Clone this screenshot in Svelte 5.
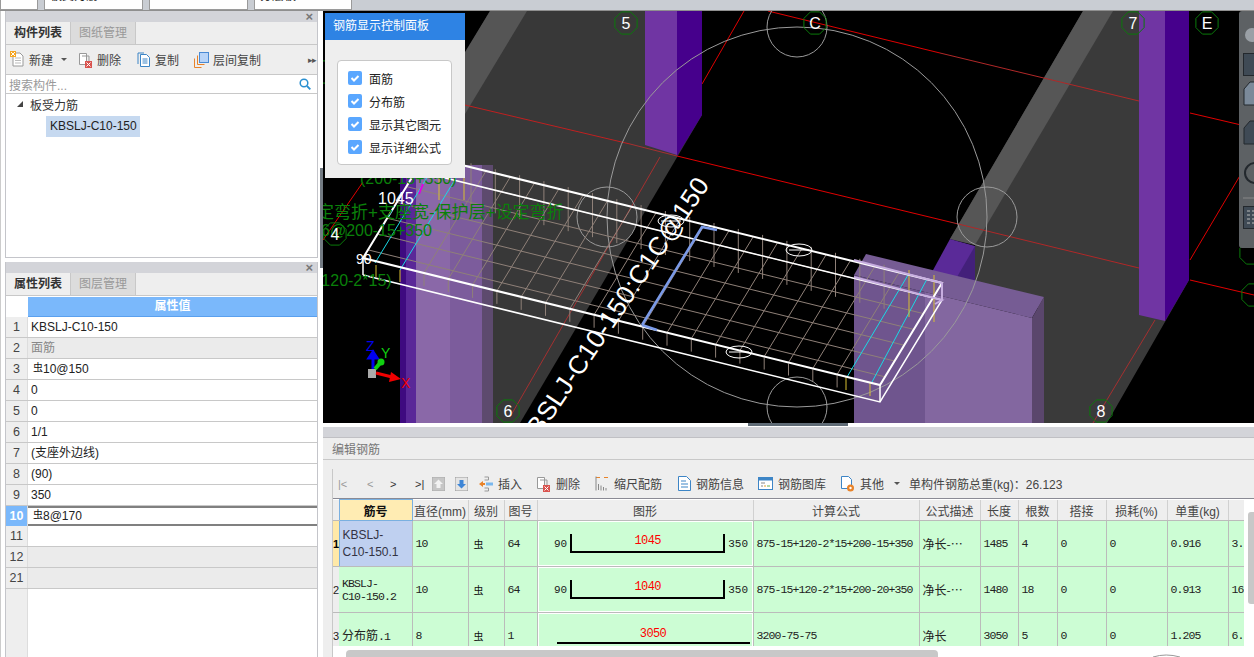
<script>
  const props = [
    { n: 1, v: 'KBSLJ-C10-150' },
    { n: 2, v: '面筋', group: true },
    { n: 3, v: '10@150', grade: true },
    { n: 4, v: '0' },
    { n: 5, v: '0' },
    { n: 6, v: '1/1' },
    { n: 7, v: '(支座外边线)' },
    { n: 8, v: '(90)' },
    { n: 9, v: '350' },
    { n: 10, v: '8@170', grade: true, active: true },
    { n: 11, v: '' },
    { n: 12, v: '', group: true },
    { n: 21, v: '', group: true }
  ];

  const checks = ['面筋', '分布筋', '显示其它图元', '显示详细公式'];

  const cols = [6, 73, 56, 36, 33, 216, 166, 61, 38, 39, 49, 61, 61, 61];
  const heads = ['筋号', '直径(mm)', '级别', '图号', '图形', '计算公式', '公式描述', '长度', '根数', '搭接', '损耗(%)', '单重(kg)', '总重'];

  const rows = [
    { n: 1, dia: 10, fig: 64, l: 90, mid: 1045, r: 350, f: '875-15+120-2*15+200-15+350', d: '净长-…', len: 1485, cnt: 4, w: '0.916', t: '3.' },
    { n: 2, dia: 10, fig: 64, l: 90, mid: 1040, r: 350, f: '875-15+120-2*15+200-20+350', d: '净长-…', len: 1480, cnt: 18, w: '0.913', t: '16' },
    { n: 3, dia: 8, fig: 1, mid: 3050, flat: true, f: '3200-75-75', d: '净长', len: 3050, cnt: 5, w: '1.205', t: '6.' }
  ];

  // slab corners in page coordinates, read off the 3d view
  const BL = [363, 258], BR = [880, 385], TL = [425, 156], TR = [942, 283];
  const backY = (x) => 156 + (x - 425) * 0.2456;
  const frontY = (x) => 258 + (x - 363) * 0.2456;
  const lerp = (a, b, t) => [a[0] + (b[0] - a[0]) * t, a[1] + (b[1] - a[1]) * t];
  const quad = (pts, dy = 0) => pts.map((p) => p[0] + ',' + (p[1] + dy)).join(' ');

  const frontTicks = Array.from({ length: 18 }, (_, i) => 424 + 24.3 * i);
  const backTicks = Array.from({ length: 18 }, (_, i) => 471 + 24.3 * i);
  const longLines = [0.08, 0.235, 0.39, 0.545, 0.7, 0.855].map((v) => [lerp(BL, TL, v), lerp(BR, TR, v)]);

  function octagon(cx, cy, r) {
    let p = [];
    for (let i = 0; i < 8; i++) {
      const a = Math.PI / 8 + (i * Math.PI) / 4;
      p.push((cx + r * Math.cos(a)).toFixed(1) + ',' + (cy + r * Math.sin(a)).toFixed(1));
    }
    return p.join(' ');
  }

  const axes = [
    { x: 626, y: 23, t: '5' },
    { x: 815, y: 23, t: 'C' },
    { x: 1133, y: 23, t: '7' },
    { x: 1207, y: 23, t: 'E' },
    { x: 335, y: 234, t: '4' },
    { x: 508, y: 411, t: '6' },
    { x: 1101, y: 411, t: '8' },
    { x: 323, y: 72, t: '' },
    { x: 1254, y: 60, t: '' },
    { x: 1251, y: 253, t: '' },
    { x: 1253, y: 295, t: '' }
  ];
</script>

<div class="app">
  <div class="topbar">
    <div class="toptab t0"></div>
    <div class="toptab t1"><span>板受力筋</span></div>
    <div class="toptab t1"><span>KBSLJ-C10-150</span></div>
    <div class="toptab t2"><span>分层板2</span></div>
  </div>

  <div class="main">
    <div class="left">
      <section class="panel first">
        <div class="panel-title"><span class="close">×</span></div>
        <div class="tabs">
          <div class="tab on">构件列表</div>
          <div class="tab">图纸管理</div>
        </div>
        <div class="ptools">
          <div class="pt w-new">
            <svg width="15" height="17" viewBox="0 0 15 17"><path d="M3 2h7l3 3v10H3z" fill="#fff" stroke="#999"/><path d="M5 7h6M5 9.5h6M5 12h6" stroke="#bbb"/><rect x="0" y="0" width="6" height="6" fill="#f5a623"/><path d="M1 1l4 4M5 1L1 5" stroke="#fff"/></svg>
            <span>新建</span><i class="caret"></i>
          </div>
          <div class="pt w-del">
            <svg width="15" height="16" viewBox="0 0 15 16"><path d="M1.500 1.500h7v11h-7z" fill="#fff" stroke="#999"/><path d="M4 4h7v8" fill="none" stroke="#999"/><rect x="7" y="9" width="7" height="7" fill="#d9534f"/><path d="M8.500 10.500l4 4M12.500 10.500l-4 4" stroke="#fff"/></svg>
            <span>删除</span>
          </div>
          <div class="pt w-copy">
            <svg width="14" height="15" viewBox="0 0 14 15"><path d="M3.500 2.500h6l3 3v9h-9z" fill="#fff" stroke="#3d85c6"/><path d="M1 1h6" stroke="#3d85c6"/><path d="M1 1v11" stroke="#3d85c6"/><path d="M5.500 7h5M5.500 9h5M5.500 11h5" stroke="#3d85c6"/></svg>
            <span>复制</span>
          </div>
          <div class="pt">
            <svg width="15" height="16" viewBox="0 0 15 16"><rect x="5.500" y="0.500" width="9" height="10" fill="#b8d4f8" stroke="#4a8ad4"/><path d="M3.500 3.500v9h7" fill="none" stroke="#e8832a"/><path d="M0.500 6.500v9h7" fill="none" stroke="#e8832a"/></svg>
            <span>层间复制</span>
          </div>
          <div class="more">▸▸</div>
        </div>
        <div class="search">
          <span>搜索构件...</span>
          <svg width="12" height="12" viewBox="0 0 12 12"><circle cx="5" cy="5" r="3.800" fill="none" stroke="#2a8fd0" stroke-width="1.500"/><path d="M8 8l3.300 3.300" stroke="#2a8fd0" stroke-width="1.800"/></svg>
        </div>
        <div class="tree">
          <div class="node"><i class="tri"></i><span>板受力筋</span></div>
          <div class="leaf">KBSLJ-C10-150</div>
        </div>
      </section>

      <section class="panel second">
        <div class="panel-title"><span class="close">×</span></div>
        <div class="tabs">
          <div class="tab on">属性列表</div>
          <div class="tab">图层管理</div>
        </div>
        <div class="prop-head"><div class="num blank"></div><div class="val-head">属性值</div></div>
        {#each props as p}
          <div class="prop" class:group={p.group} class:active={p.active}>
            <div class="num">{p.n}</div>
            <div class="val">{#if p.grade}<span class="grade">虫</span>{/if}{p.v}</div>
          </div>
        {/each}
        <div class="prop-rest"><div class="num"></div></div>
      </section>
    </div>

    <div class="vsplit"><div class="thumb"></div></div>

    <div class="right">
      <div class="viewport">
        <svg class="scene" width="931" height="412" viewBox="323 11 931 412">
          <rect x="323" y="11" width="931" height="412" fill="#000" />

          <!-- floor slabs -->
          <polygon points="490,11 702,11 702,115 520,423 400,423 400,163" fill="#383838" />
          <polygon points="490,11 527,11 465,114 465,52" fill="#555" />
          <polygon points="1083,11 1189,11 1189,280 1107,423 1044,423 1044,310 975,290 975,245 950,239" fill="#3a3a3a" />
          <polygon points="1083,11 1113,11 975,245 950,239" fill="#565656" />

          <!-- red axis lines -->
          <g fill="none" stroke="#e00000" stroke-width="1">
            <path d="M768 11L940 53" />
            <path d="M1190 113L1254 128M1190 280L1254 295" />
            <path d="M744 11L702 84" />
            <path d="M630 144L465 105" stroke="#c02020" />
            <path d="M677 156L950 222" />
            <path d="M1254 152L1190 260" />
            <path d="M363 182L323 240" />
            <path d="M660 157L510 417" stroke="#a53030" />
            <path d="M630 144L677 156" stroke="#a53030" />
            <path d="M950 222L1139 268" stroke="#b02828" />
            <path d="M940 53L1139 101" stroke="#b02828" />
            <path d="M1155 320L1093 423" stroke="#a53030" />
          </g>

          <!-- columns -->
          <polygon points="645,11 677,11 677,155 645,145" fill="#7035a3" />
          <polygon points="677,11 702,11 702,115 677,156" fill="#46008c" />
          <polygon points="1139,11 1165,11 1165,321 1139,315" fill="#7035a3" />
          <polygon points="1165,11 1189,11 1189,280 1165,321" fill="#46008c" />

          <rect x="400" y="165" width="6" height="258" fill="#3e0a80" />
          <rect x="406" y="165" width="10" height="258" fill="#5a2898" />
          <rect x="416" y="165" width="34" height="258" fill="#8a68a8" />
          <rect x="450" y="165" width="32" height="258" fill="#7c5c9c" />
          <rect x="482" y="165" width="11" height="258" fill="#5d4a6e" />

          <polygon points="932,272 950,239 975,246 975,290" fill="#5a2a98" />
          <polygon points="957,277 975,246 975,283" fill="#43207a" />
          <polygon points="866,254 1044,297 1032,318 854,275" fill="#765c94" />
          <polygon points="854,275 925,292 925,423 854,423" fill="#6f558e" />
          <polygon points="925,292 1032,318 1032,423 925,423" fill="#8367a0" />
          <polygon points="1032,318 1044,297 1044,423 1032,423" fill="#5a466c" />

          <!-- guide circles -->
          <g fill="none" stroke="#9a9a9a" stroke-width="1">
            <circle cx="797" cy="217" r="190" />
            <circle cx="797" cy="27" r="30" />
            <circle cx="797" cy="407" r="30" />
            <circle cx="607" cy="217" r="30" />
            <circle cx="987" cy="217" r="30" />
          </g>

          <!-- rebar grid -->
          <g stroke="#8f8078" stroke-width="1" fill="none">
            {#each longLines as l}
              <line x1={l[0][0]} y1={l[0][1]} x2={l[1][0]} y2={l[1][1]} />
            {/each}
            {#each frontTicks as x}
              <line x1={x} y1={frontY(x)} x2={x + 62} y2={frontY(x) - 102} />
              <line x1={x} y1={frontY(x) + 1} x2={x} y2={frontY(x) + 13} />
            {/each}
            {#each backTicks as x}
              <line x1={x} y1={backY(x) - 4} x2={x} y2={backY(x) + 40} />
            {/each}
          </g>

          <!-- cyan and yellow edge bars -->
          <g fill="none" stroke-width="1">
            <path d="M375 263L437 161M400 270L462 168M847 377L908 275M872 382L927 279" stroke="#19d9e6" />
            <path d="M376 265V277M400 270V282M439 177V200M464 177V200M909 270V317M934 275V322M846 377V390M870 383V396" stroke="#d8c030" />
          </g>
          <path d="M419 194L423 184" stroke="#e000e0" stroke-width="2" />

          <!-- slab outline -->
          <g fill="none" stroke="#fff">
            <polygon points={quad([TL, TR, BR, BL])} stroke-width="2" />
            <polyline points={quad([TL, TR, BR, BL], 17)} stroke-width="1.500" />
            <path d="M363 258V275M880 385V402" stroke-width="1.500" />
          </g>
          <path d="M854 260L942 283L942 300M854 277L942 300L935 304" fill="none" stroke="#c7aee0" stroke-width="2" />
          <path d="M642 325L702 227L717 230M642 325L657 330" fill="none" stroke="#7a9ae8" stroke-width="2.500" />

          <g fill="none" stroke="#fff" stroke-width="1">
            <ellipse cx="799" cy="250" rx="13" ry="6" />
            <ellipse cx="739" cy="352" rx="13" ry="6" />
            <ellipse cx="671" cy="221" rx="13" ry="6" />
            <path d="M789 250h20M729 352h20M661 221h20" />
          </g>

          <!-- dimension labels -->
          <text class="rot" x="530" y="452" transform="rotate(-56 530 452)" textLength="322" lengthAdjust="spacing">KBSLJ-C10-150:C1C@150</text>
          <g class="green">
            <text x="360" y="184">(200-15+350)</text>
            <text class="wide" x="317" y="218">定弯折+支座宽-保护层+设定弯折</text>
            <text x="321" y="236">6@200-15+350</text>
            <text x="316" y="286">(120-2*15)</text>
          </g>
          <text class="dim" x="378" y="204">1045</text>
          <text class="dim small" x="356" y="264">90</text>

          <!-- axis markers -->
          {#each axes as a}
            <polygon points={octagon(a.x, a.y, 12)} fill="none" stroke="#0a7a0a" />
            <text class="axis" x={a.x} y={a.y + 6}>{a.t}</text>
          {/each}

          <!-- gizmo -->
          <rect x="368" y="369" width="8" height="9" fill="#aaa" />
          <path d="M373 369V358M369 358h8l-4 -6z" stroke="#0000f0" stroke-width="3" fill="#0000f0" />
          <path d="M375 369L381 362" stroke="#10d010" stroke-width="4" />
          <circle cx="381" cy="362" r="3.500" fill="#10d010" />
          <path d="M376 373L392 377" stroke="#f00000" stroke-width="3" />
          <polygon points="391,372 401,379 389,382" fill="#f00000" />
          <text class="giz" x="366" y="351" fill="#0000f0">Z</text>
          <text class="giz" x="381" y="358" fill="#10d010">Y</text>
          <text class="giz" x="401" y="388" fill="#f00000">X</text>

          <!-- right side view toolbar -->
          <rect x="1239" y="11" width="20" height="237" rx="3" fill="#5d6164" />
          <circle cx="1252" cy="35" r="7" fill="#9aa0a6" />
          <rect x="1243.500" y="53.500" width="16" height="22" fill="#3f4a55" stroke="#23282d" />
          <polygon points="1244,89 1250,82 1260,82 1260,105 1244,105" fill="#7b8a9a" stroke="#23282d" />
          <polygon points="1244,128 1250,121 1260,121 1260,144 1244,144" fill="#3f4a55" stroke="#23282d" />
          <circle cx="1255" cy="173" r="10" fill="none" stroke="#23282d" stroke-width="2" />
          <path d="M1243 198h12" stroke="#888" />
          <rect x="1243.500" y="206.500" width="16" height="22" fill="#3f4a55" stroke="#23282d" />
          <path d="M1247 211h3M1247 215h3M1247 219h3M1247 223h3M1252 211h6M1252 215h6M1252 219h6M1252 223h6" stroke="#bbb" />
        </svg>

        <div class="control">
          <div class="control-head">钢筋显示控制面板</div>
          <div class="control-body">
            <div class="check-box">
              {#each checks as c}
                <div class="check">
                  <svg width="14" height="14" viewBox="0 0 14 14"><rect width="14" height="14" rx="2" fill="#5aa7ff" /><path d="M3.500 7l2.500 2.500 4.500-4.500" fill="none" stroke="#fff" stroke-width="2" /></svg>
                  <span>{c}</span>
                </div>
              {/each}
            </div>
          </div>
        </div>
      </div>

      <div class="hsplit"><div class="hthumb"></div></div>

      <div class="editor">
        <div class="editor-bar"></div>
        <div class="editor-title">编辑钢筋</div>
        <div class="editor-body">
          <div class="etools">
            <div class="nav">
              <span class="n1">|&lt;</span><span class="n2">&lt;</span><span class="n3">&gt;</span><span class="n4">&gt;|</span>
            </div>
            <svg class="mv" width="13" height="14" viewBox="0 0 13 14"><rect width="13" height="14" fill="#c6c6c6" stroke="#aaa" /><path d="M6.500 2.500L11 7H8.500v4h-4V7H2z" fill="#f2f2f2" /></svg>
            <svg class="mv m2" width="13" height="14" viewBox="0 0 13 14"><rect width="13" height="14" fill="#e4e4e4" stroke="#999" /><path d="M6.500 11.500L11 7H8.500V3h-4v4H2z" fill="#3d85d6" /></svg>
            <div class="et">
              <svg width="14" height="16" viewBox="0 0 14 16"><path d="M5.500 1h4v3h-4M5.500 12h4v3h-4" fill="none" stroke="#999" /><rect x="7" y="6.500" width="7" height="3" fill="#7ab8ee" /><path d="M0 8l4-3v2h2v2H4v2z" fill="#e8832a" /></svg>
              <span>插入</span>
            </div>
            <div class="et e-del">
              <svg width="15" height="16" viewBox="0 0 15 16"><path d="M1.500 1.500h7v11h-7z" fill="#fff" stroke="#999" /><path d="M4 4h7v8" fill="none" stroke="#999" /><rect x="7" y="9" width="7" height="7" fill="#d9534f" /><path d="M8.500 10.500l4 4M12.500 10.500l-4 4" stroke="#fff" /></svg>
              <span>删除</span>
            </div>
            <div class="et e-scale">
              <svg width="14" height="15" viewBox="0 0 14 15"><path d="M1 1.500h4M9 1.500h4" stroke="#e8832a" /><path d="M1 .5v14M3.500 8v6M6 9.500v5M8.500 11v3.500M11 12v2.500" stroke="#888" /></svg>
              <span>缩尺配筋</span>
            </div>
            <div class="et">
              <svg width="13" height="15" viewBox="0 0 13 15"><path d="M.5.500h8l4 4v10H.5z" fill="#fff" stroke="#3d85c6" /><path d="M3 5h5M3 8h7M3 11h7" stroke="#3d85c6" /></svg>
              <span>钢筋信息</span>
            </div>
            <div class="et">
              <svg width="15" height="13" viewBox="0 0 15 13"><rect x=".5" y=".5" width="14" height="12" fill="#fff" stroke="#3d85c6" /><rect x="1" y="1" width="13" height="2.500" fill="#3d85c6" /><path d="M3 6h4M3 9h2" stroke="#888" /><path d="M6 9h2" stroke="#e8a02a" /><path d="M9 9h3" stroke="#6ab04c" /></svg>
              <span>钢筋图库</span>
            </div>
            <div class="et last">
              <svg width="15" height="16" viewBox="0 0 15 16"><path d="M1.500.500h7l3 3v9h-10z" fill="#fff" stroke="#3d85c6" /><circle cx="10.500" cy="12" r="3.500" fill="#e8832a" /><circle cx="10.500" cy="12" r="1.200" fill="#fff" /></svg>
              <span>其他</span><i class="caret"></i>
            </div>
            <div class="total">单构件钢筋总重(kg)：26.123</div>
          </div>

          <div class="grid-row">
            <div class="grid-wrap">
              <table>
                <colgroup>
                  {#each cols as w}<col style="width:{w}px" />{/each}
                </colgroup>
                <thead>
                  <tr>
                    <th class="rn"></th>
                    {#each heads as h, i}
                      <th class:cur={i === 0}>{h}</th>
                    {/each}
                  </tr>
                </thead>
                <tbody>
                  {#each rows as r}
                    <tr>
                      <td class="rn" class:sel={r.n === 1}>{r.n}</td>
                      {#if r.n === 1}
                        <td class="name-sel">KBSLJ-<br />C10-150.1</td>
                      {:else if r.n === 2}
                        <td class="m name">KBSLJ-<br />C10-150.2</td>
                      {:else}
                        <td class="m name"><span class="cn">分布筋</span>.1</td>
                      {/if}
                      <td class="m">{r.dia}</td>
                      <td class="gr">虫</td>
                      <td class="m">{r.fig}</td>
                      <td class="shape">
                        {#if r.flat}
                          <div class="flat"><span>{r.mid}</span></div>
                        {:else}
                          <div class="fig">
                            <span class="side">{r.l}</span>
                            <div class="bracket"><span>{r.mid}</span></div>
                            <span class="side">{r.r}</span>
                          </div>
                        {/if}
                      </td>
                      <td class="m">{r.f}</td>
                      <td class="cn desc">{r.d}</td>
                      <td class="m">{r.len}</td>
                      <td class="m">{r.cnt}</td>
                      <td class="m">0</td>
                      <td class="m">0</td>
                      <td class="m">{r.w}</td>
                      <td class="m">{r.t}</td>
                    </tr>
                  {/each}
                </tbody>
              </table>
            </div>
            <div class="vscroll"><div class="vbar"></div></div>
          </div>
          <div class="hscroll">
            <div class="hbar"></div>
            <svg class="arc" width="27" height="3" viewBox="0 0 27 3"><path d="M0 3Q13 -1 27 3" fill="none" stroke="#999" /></svg>
          </div>
        </div>
      </div>
    </div>
  </div>
</div>

<style>
  :global(body) {
    margin: 0;
    background: #fff;
  }
  .app {
    width: 1254px;
    height: 657px;
    overflow: hidden;
    display: flex;
    flex-direction: column;
    font-family: "Liberation Sans", "Noto Sans CJK SC", sans-serif;
    font-size: 12px;
    color: #333;
  }

  .topbar {
    height: 10px;
    border-bottom: 1px solid #8f8f8f;
    background: #c9cdd3;
    display: flex;
    gap: 6px;
  }
  .toptab {
    height: 10px;
    background: #fff;
    border: 1px solid #9a9a9a;
    border-top: 0;
    box-sizing: border-box;
    overflow: hidden;
    display: flex;
    align-items: flex-end;
    padding-left: 5px;
    color: #222;
  }
  .toptab span {
    margin-bottom: 7px;
    line-height: 12px;
    white-space: nowrap;
  }
  .t0 { width: 38px; }
  .t1 { width: 99px; }
  .t2 { width: 98px; }

  .main {
    flex: 1;
    display: flex;
    min-height: 0;
  }

  .left {
    width: 318px;
    box-sizing: border-box;
    border-left: 1px solid #ccc;
    padding-left: 4px;
    display: flex;
    flex-direction: column;
    gap: 4px;
    background: #fff;
  }
  .panel {
    box-sizing: border-box;
    border: 1px solid #c4c5ca;
    border-top: 0;
    display: flex;
    flex-direction: column;
    background: #fff;
  }
  .first { height: 247px; }
  .second { flex: 1; min-height: 0; border-bottom: 0; }
  .panel-title {
    height: 11px;
    background: #d3d4d9;
    display: flex;
    justify-content: flex-end;
    align-items: center;
    padding-right: 4px;
  }
  .close {
    font-size: 13px;
    line-height: 11px;
    font-weight: bold;
    color: #777;
  }
  .tabs {
    height: 22px;
    display: flex;
    background: #eee;
    border-bottom: 1px solid #c8c8c8;
    line-height: 23px;
  }
  .tab {
    width: 64px;
    text-align: center;
    background: #dcdcdc;
    color: #999;
    border-right: 1px solid #c8c8c8;
  }
  .tab.on {
    background: #efefef;
    color: #333;
    font-weight: bold;
  }

  .ptools {
    height: 29px;
    background: #eee;
    border-bottom: 1px solid #c8c8c8;
    display: flex;
    align-items: center;
    padding-left: 4px;
  }
  .pt {
    display: flex;
    align-items: center;
    gap: 4px;
    color: #444;
  }
  .w-new { width: 68px; }
  .w-del { width: 59px; }
  .w-copy { width: 57px; }
  .more {
    margin-left: auto;
    margin-right: 1px;
    font-size: 9px;
    color: #555;
    letter-spacing: -1px;
  }
  .caret {
    display: inline-block;
    width: 0;
    height: 0;
    margin-left: 4px;
    border-left: 3px solid transparent;
    border-right: 3px solid transparent;
    border-top: 3px solid #555;
  }
  .search {
    height: 18px;
    border-bottom: 1px solid #c8c8c8;
    display: flex;
    align-items: center;
    justify-content: space-between;
    padding: 0 6px 0 3px;
    color: #999;
    background: #fff;
  }
  .tree {
    flex: 1;
  }
  .node {
    height: 20px;
    padding-bottom: 2px;
    display: flex;
    align-items: center;
    padding-left: 11px;
  }
  .tri {
    width: 0;
    height: 0;
    border-left: 6px solid transparent;
    border-bottom: 6px solid #444;
    margin-right: 7px;
  }
  .leaf {
    margin-left: 40px;
    width: 94px;
    height: 21px;
    line-height: 21px;
    box-sizing: border-box;
    padding-left: 4px;
    background: #c6d9f0;
    color: #222;
  }

  .prop-head {
    height: 20px;
    margin-top: 1px;
    display: flex;
  }
  .num {
    width: 22px;
    flex: none;
    text-align: center;
    background: #eee;
    color: #444;
    font-size: 12.500px;
    border-right: 1px solid #ddd;
    box-sizing: border-box;
  }
  .num.blank {
    background: #fff;
    border: 0;
  }
  .val-head {
    flex: 1;
    background: #7ab8fb;
    border-bottom: 1px solid #5aa0ee;
    color: #fff;
    font-weight: bold;
    text-align: center;
    line-height: 19px;
  }
  .prop {
    height: 21px;
    box-sizing: border-box;
    border-bottom: 1px solid #c8c8c8;
    display: flex;
    line-height: 20px;
    color: #222;
  }
  .val {
    flex: 1;
    padding-left: 3px;
  }
  .group .val {
    background: #ebebeb;
    color: #888;
  }
  .grade {
    font-size: 10px;
    color: #111;
    margin-left: 2px;
    position: relative;
    top: -2px;
  }
  .prop.active {
    height: 20px;
    border-top: 2px solid #808080;
    border-bottom: 2px solid #808080;
    line-height: 16px;
  }
  .prop.active .num {
    margin-top: -2px;
    margin-bottom: -2px;
    background: #7ab8fb;
    color: #fff;
    font-weight: bold;
    line-height: 20px;
  }
  .prop-rest {
    flex: 1;
    display: flex;
  }

  .vsplit {
    width: 5px;
    background: #fff;
    padding-top: 157px;
    display: flex;
    justify-content: flex-end;
  }
  .thumb {
    width: 3px;
    height: 100px;
    background: #737b83;
  }

  .right {
    flex: 1;
    min-width: 0;
    display: flex;
    flex-direction: column;
  }
  .viewport {
    height: 412px;
    position: relative;
    overflow: hidden;
    background: #000;
  }
  .scene {
    display: block;
  }
  .scene text {
    font-family: "Liberation Sans", "Noto Sans CJK SC", sans-serif;
  }
  .rot {
    fill: #fff;
    font-size: 26px;
  }
  .green text {
    fill: #0a800a;
    font-size: 16px;
  }
  .green text.wide {
    font-size: 17px;
  }
  .dim {
    fill: #fff;
    font-size: 16px;
  }
  .dim.small {
    font-size: 14px;
  }
  .axis {
    fill: #fff;
    font-size: 16px;
    text-anchor: middle;
  }
  .giz {
    font-size: 14px;
  }

  .control {
    position: absolute;
    left: 2px;
    top: 2px;
    width: 140px;
    height: 165px;
    background: #eee;
    display: flex;
    flex-direction: column;
  }
  .control-head {
    height: 27px;
    line-height: 27px;
    background: #2e83e4;
    color: #fff;
    padding-left: 8px;
  }
  .control-body {
    padding: 20px 13px 0 12px;
  }
  .check-box {
    height: 105px;
    box-sizing: border-box;
    background: #fff;
    border: 1px solid #c8c8c8;
    border-radius: 4px;
    padding: 10px 0 0 10px;
    display: flex;
    flex-direction: column;
    gap: 9px;
  }
  .check {
    height: 14px;
    display: flex;
    align-items: center;
    gap: 7px;
    color: #222;
    white-space: nowrap;
  }

  .hsplit {
    height: 4px;
    background: #fff;
    padding-left: 425px;
  }
  .hthumb {
    width: 100px;
    height: 3px;
    background: #5f6b76;
  }

  .editor {
    flex: 1;
    min-height: 0;
    display: flex;
    flex-direction: column;
    background: #eee;
  }
  .editor-bar {
    height: 11px;
    background: #d3d4d9;
    border-bottom: 1px solid #c0c0c4;
    box-sizing: border-box;
    flex: none;
  }
  .editor-title {
    height: 22px;
    flex: none;
    line-height: 24px;
    padding-left: 9px;
    color: #777;
    border-bottom: 1px solid #c8c8c8;
    box-sizing: border-box;
  }
  .editor-body {
    flex: 1;
    min-height: 0;
    margin: 9px 0 0 9px;
    border-left: 1px solid #c8c8c8;
    display: flex;
    flex-direction: column;
  }
  .etools {
    height: 30px;
    flex: none;
    box-sizing: border-box;
    border-bottom: 1px solid #8a8a94;
    display: flex;
    align-items: center;
    padding-left: 5px;
    color: #444;
    white-space: nowrap;
  }
  .nav {
    width: 94px;
    flex: none;
    display: flex;
    color: #999;
    font-size: 11px;
  }
  .n1 { width: 29px; }
  .n2 { width: 23px; }
  .n3 { width: 25px; color: #333; }
  .n4 { color: #333; }
  .mv { flex: none; }
  .m2 { margin-left: 10px; margin-right: 11px; }
  .et {
    display: flex;
    align-items: center;
    gap: 5px;
    margin-right: 14px;
  }
  .et.e-del { margin-right: 15px; }
  .et.e-scale { margin-right: 16px; }
  .et.last { margin-right: 9px; }
  .et .caret { margin-left: 5px; }
  .total { color: #444; }

  .grid-row {
    flex: 1;
    min-height: 0;
    display: flex;
    background: #fff;
  }
  .grid-wrap {
    width: 911px;
    flex: none;
    overflow: hidden;
  }
  .vscroll {
    flex: 1;
    padding: 13px 0 0 4px;
  }
  .vbar {
    height: 92px;
    background: #c8c8c8;
    border-radius: 3px 0 0 3px;
  }
  table {
    table-layout: fixed;
    border-collapse: collapse;
    width: 956px;
  }
  th {
    height: 19px;
    padding: 1px 0 0;
    background: #eee;
    border-right: 1px solid #d0d0d0;
    border-bottom: 1px solid #bbb;
    font-weight: normal;
    color: #444;
    white-space: nowrap;
    overflow: hidden;
  }
  th.cur {
    background: #ffecb3;
    color: #111;
    font-weight: bold;
    border: 1px solid #7ab0e0;
  }
  td {
    height: 45px;
    padding: 0 0 0 3px;
    background: #ccfdd4;
    border-right: 1px solid #bbb;
    border-bottom: 1px solid #bbb;
    box-sizing: content-box;
    white-space: nowrap;
    overflow: hidden;
    color: #222;
  }
  td.rn, th.rn {
    padding: 0;
    background: #eee;
    text-align: center;
    font-size: 11px;
    overflow: visible;
    border-right: 0;
  }
  td.sel {
    background: #ffe9a8;
    font-weight: bold;
    color: #000;
  }
  .m {
    font-family: "Liberation Mono", "Noto Sans CJK SC", monospace;
    font-size: 11.500px;
    letter-spacing: -0.9px;
  }
  .name {
    line-height: 13px;
    padding-left: 3px;
  }
  .cn {
    font-family: "Noto Sans CJK SC", sans-serif;
    font-size: 12px;
    letter-spacing: 0;
  }
  .desc {
    padding-left: 3px;
  }
  .gr {
    font-family: "Noto Sans CJK SC", sans-serif;
    font-size: 10px;
    padding-left: 5px;
    color: #111;
  }
  .name-sel {
    background: #bfd0f0;
    line-height: 17px;
    border-left: 1px solid #7ab0e0;
    padding-left: 3px;
    color: #334;
  }
  td.shape {
    padding: 1px;
    background: #fff;
    height: 43px;
  }
  .fig, .flat {
    height: 43px;
    background: #ccfdd4;
    color: #222;
  }
  .fig {
    display: flex;
    align-items: center;
    justify-content: center;
    gap: 3px;
    padding-left: 12px;
    box-sizing: border-box;
  }
  .side {
    font-family: "Liberation Mono", monospace;
    font-size: 11px;
  }
  .bracket {
    width: 155px;
    height: 19px;
    box-sizing: border-box;
    border: 2px solid #000;
    border-top: 0;
    text-align: center;
    font-family: "Liberation Mono", monospace;
    font-size: 12px;
    letter-spacing: -0.6px;
    line-height: 15px;
    color: #f00;
  }
  .flat {
    box-sizing: border-box;
    padding: 13px 2px 0 18px;
  }
  .flat span {
    display: block;
    text-align: center;
    border-bottom: 2px solid #000;
    font-family: "Liberation Mono", monospace;
    font-size: 12px;
    letter-spacing: -0.6px;
    line-height: 15px;
    color: #f00;
  }
  .hscroll {
    height: 11px;
    flex: none;
    background: #fff;
    padding: 4px 0 0 13px;
    box-sizing: border-box;
    display: flex;
  }
  .hbar {
    width: 592px;
    height: 7px;
    background: #c8c8c8;
    border-radius: 4px 4px 0 0;
    flex: none;
  }
  .arc {
    margin-left: 215px;
    margin-top: 4px;
    flex: none;
  }
</style>
